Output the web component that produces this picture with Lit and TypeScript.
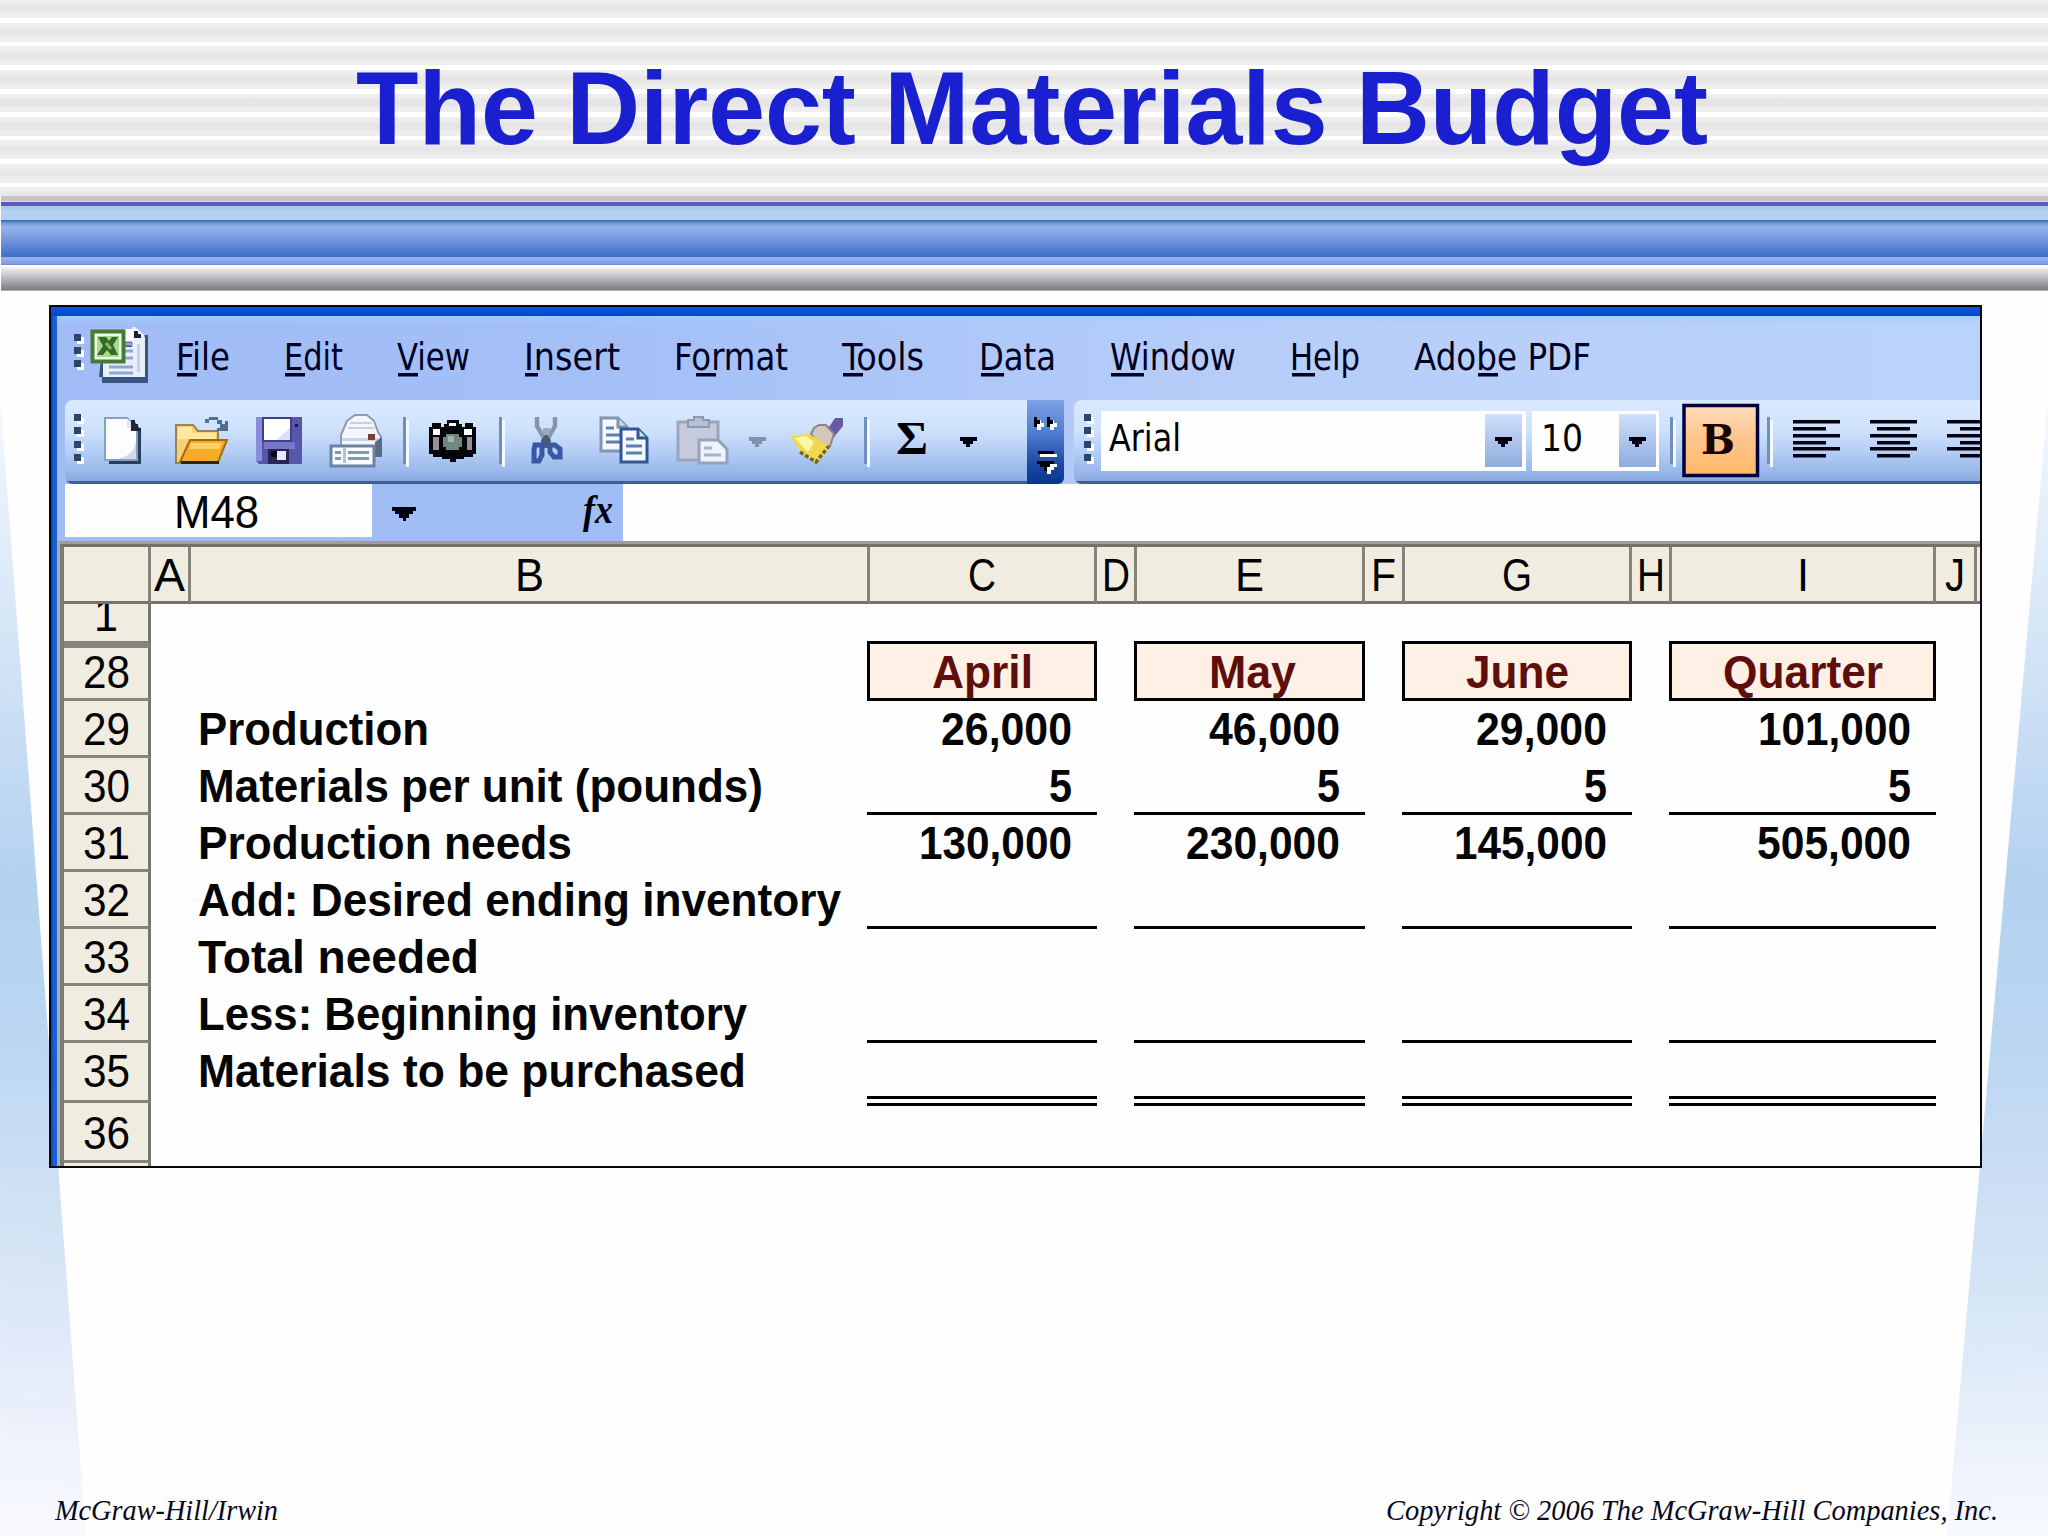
import { LitElement, html, svg, css } from "lit";
import { customElement } from "lit/decorators.js";

/* One line of text condensed or expanded to an exact width. */
const line = (cls: string, width: number, height: number, baseline: number, content: unknown) => html`
  <svg class="line" width=${width} height=${height}>
    <text class=${cls} x="0" y=${baseline} textLength=${width} lengthAdjust="spacingAndGlyphs">${content}</text>
  </svg>`;

/* Menu captions: text, width, start and length of the access key underline. */
const MENUS: [string, number, number, number][] = [
  ["File", 54, 1, 20],
  ["Edit", 59, 1, 20],
  ["View", 73, 1, 20],
  ["Insert", 96, 1, 13],
  ["Format", 114, 22, 20],
  ["Tools", 82, 1, 20],
  ["Data", 77, 2, 23],
  ["Window", 126, 1, 33],
  ["Help", 70, 2, 23],
  ["Adobe PDF", 177, 64, 20],
];

/* Column letters: text, cell width with its border, letter width. */
const COLS: [string, number, number][] = [
  ["A", 40, 31], ["B", 679, 29], ["C", 227, 28], ["D", 40, 28], ["E", 228, 29],
  ["F", 40, 25], ["G", 227, 30], ["H", 40, 28], ["I", 264, 12], ["J", 41, 20],
];

const HEADS: [string, number][] = [["April", 101], ["May", 87], ["June", 103], ["Quarter", 160]];

interface Row { n: string; label: string; w: number; v?: [string, number][]; rule?: string }
const ROWS: Row[] = [
  { n: "29", label: "Production", w: 231, v: [["26,000", 131], ["46,000", 131], ["29,000", 131], ["101,000", 153]] },
  { n: "30", label: "Materials per unit (pounds)", w: 565, v: [["5", 23], ["5", 23], ["5", 23], ["5", 23]], rule: "single" },
  { n: "31", label: "Production needs", w: 374, v: [["130,000", 153], ["230,000", 154], ["145,000", 153], ["505,000", 154]] },
  { n: "32", label: "Add: Desired ending inventory", w: 643, rule: "single" },
  { n: "33", label: "Total needed", w: 281 },
  { n: "34", label: "Less: Beginning inventory", w: 549, rule: "single" },
  { n: "35", label: "Materials to be purchased", w: 548, rule: "double" },
];

const grip = (x: number, ys: number[]) => svg`${ys.map(
  (y) => svg`<rect x=${x + 3} y=${y + 3} width="7" height="7" fill="#fff"/><rect x=${x} y=${y} width="7" height="7" fill="#2b4668"/>`)}`;
const sep = (x: number) => svg`<rect x=${x} y="417" width="3" height="47" fill="#6f8fbf"/><rect x=${x + 3} y="420" width="3" height="47" fill="#f4f9ff"/>`;
const arrow = (x: number, color: string) => svg`<path d=${`M${x} 437h17v4h-4v3h-3v3h-4v-3h-3v-3h-3z`} fill=${color}/>`;
const bars = (x: number, inset: number) => svg`${[420, 427, 434, 441, 447, 454].map(
  (y, i) => svg`<rect x=${i % 2 ? x + inset : x} y=${y} width=${i % 2 ? 33 : 47} height="3.500" fill="#00000e"/>`)}`;

/* Slots sit edge to edge in their bar; each drawing uses window coordinates. */
const slot = (x: number, end: number, art: unknown, y = 400, h = 84) => html`
  <svg class="slot" width=${end - x} height=${h} viewBox=${`${x} ${y} ${end - x} ${h}`}>${art}</svg>`;

const excel = svg`
  <path d="M103 342h36v-7h9v48h-46v-6h-3z" fill="#3a5680"/>
  <path d="M103 347h29v-20h3l10 10v40h-42z" fill="#e9f0fc"/>
  <path d="M124 329h9v12h-9zM137 335v-6l8 7z" fill="#fff"/><path d="M134 331h4v3h3v4h-7z" fill="#15233c"/>
  <path d="M124 344h9M124 351h9M124 358h9M109 367h24M109 373h24" stroke="#8fa8d3" stroke-width="3"/>
  <path d="M137 344h3v28h-3z" fill="#c4d2ee"/>
  <rect x="92.5" y="331.500" width="31" height="30" fill="#eefbe2" stroke="#477a35" stroke-width="4"/>
  <rect x="97" y="336" width="22" height="21" fill="#a7d98a"/>
  <path d="M98 337h8l3 4 3-4h6l-5 8 5 10h-7l-4-5-4 5h-6l6-9z" fill="#37692c"/>
  <path d="M106 343l5 6" stroke="#7fc05b" stroke-width="3"/>`;
const newDoc = svg`
  <path d="M109 421h25l7 9v34h-32z" fill="#263f63"/>
  <path d="M105 418h22l10 10v32h-32z" fill="#fdfdff" stroke="#8ba0bd" stroke-width="2"/>
  <path d="M112 459c14 0 22-6 24-18v18z" fill="#d3d9e8"/>
  <path d="M127 418v10h10z" fill="#dfe6f2"/><path d="M131 420h4v4h3v4h3v3h-10z" fill="#19263d"/>`;
const openDoc = svg`
  <path d="M176 425h17l5 6h20v32h-42z" fill="#f7cf74" stroke="#9b8250" stroke-width="2"/>
  <path d="M178 427h14v6h24v6h-38z" fill="#ffe7a1"/>
  <path d="M190 440h37l-9 22h-38z" fill="#f5ac28" stroke="#a46a12" stroke-width="2"/>
  <path d="M191 443h31l-3 6h-30z" fill="#ffd368"/>
  <path d="M181 461h38v3h-38z" fill="#30240e"/>
  <path d="M205 423v-4h4v-2h9v3h4v4h3v-3h3v10h-11v-3h3v-4h-3v-4h-8v3z" fill="#50708f"/>`;
const saveDoc = svg`
  <path d="M256 417h46v47h-43l-3-3z" fill="#5856aa"/>
  <path d="M256 417h6v44h-6z" fill="#8a8bdc"/>
  <path d="M262 417h30v25h-30z" fill="#40408c"/><path d="M264 419h26v21h-26z" fill="#fff"/>
  <path d="M290 428v12h-14z" fill="#dbe0fa"/><path d="M264 442h31v7h-31z" fill="#7877ca"/>
  <path d="M268 449h21v15h-21z" fill="#272654"/><path d="M277 451h9v9h-9z" fill="#e6e9fb"/><path d="M271 451h6v6h-6z" fill="#08081d"/>
  <path d="M295 424h3v3h-3z" fill="#18183d"/>`;
const printDoc = svg`
  <path d="M341 435l6-14 8-6h12l7 6 4 11 3 5v19h-40z" fill="#f4f6fb" stroke="#8f9cb2" stroke-width="2"/>
  <path d="M350 423h22M348 428h26" stroke="#c8d0de" stroke-width="2"/>
  <path d="M342 438h38v3h-38z" fill="#cfd6e2"/><path d="M368 434h7v6h-7z" fill="#7a3d34"/>
  <path d="M375 442l7-5v20h-7z" fill="#5b6b84"/>
  <path d="M331 446h43v20h-43z" fill="#f8fbff" stroke="#6b849f" stroke-width="3"/>
  <path d="M335 451h6v3h-6zM335 457h6v3h-6zM348 451h21v3h-21zM348 457h21v3h-21z" fill="#8498b0"/>
  <path d="M343 448h3v15h-3z" fill="#b3c4d8"/>`;
const camera = svg`
  <path d="M429 427h3v-4h9v4h3v-3h3v-4h12v4h3v3h3v-4h8v4h3v27h-3v3h-9v2h-8v3h-6v-3h-8v-2h-9v-3h-4z" fill="#05060b"/>
  <path d="M433 429h7v6h-7zM464 429h8v6h-8zM449 423h7v3h-7z" fill="#fff"/>
  <path d="M433 437h6v13h-6zM467 437h5v13h-5z" fill="#9a8f98"/>
  <path d="M446 434h13v3h3v10h-3v3h-13v-3h-3v-10h3z" fill="#72877f"/><path d="M448 436h6v6h-6z" fill="#a1b5aa"/>`;
const cut = svg`
  <path d="M537 417v9l8 14M555 417v9l-8 14" fill="none" stroke="#8396ae" stroke-width="4.500"/>
  <path d="M543 428h7v6h-7z" fill="#9aabbf"/>
  <path d="M546 434l5 6-2 8h-7l-1-8z" fill="#4a5a70"/>
  <path d="M535 445h7v10l-3 6h-5v-11zM550 445h5l5 4v8h-6l-4-5z" fill="none" stroke="#3857a4" stroke-width="5"/>`;
const page = (x: number, y: number, s: string) => svg`
  <path d=${`M${x} ${y}h17l9 9v24h-26z`} fill="#f5f9ff" stroke=${s} stroke-width="3"/>
  <path d=${`M${x + 17} ${y}v9h9`} fill="#cfdcf3" stroke=${s} stroke-width="3"/>
  <path d=${`M${x + 5} ${y + 10}h8M${x + 5} ${y + 17}h16M${x + 5} ${y + 24}h16`} stroke="#5f7fae" stroke-width="3"/>`;
const copy = svg`${page(601, 418, "#8095b1")}${page(621, 429, "#2f5791")}`;
const paste = svg`
  <path d="M678 422h40v38h-40z" fill="#c5cbdd" stroke="#9aa6be" stroke-width="3"/>
  <path d="M688 427v-7h6v-3h9v3h6v7z" fill="#b6bfd3" stroke="#8c9ab4" stroke-width="2"/>
  <path d="M699 440h19l9 9v14h-28z" fill="#eef2fb" stroke="#94a2bd" stroke-width="3"/>
  <path d="M704 448h8M704 455h17" stroke="#a5b2ca" stroke-width="3"/>`;
const brush = svg`
  <path d="M829 427l6-9h8v8l-9 11-7-5z" fill="#655aa5"/><path d="M829 430l6 6-4 3-6-6z" fill="#342e68"/>
  <path d="M811 434l3-6 5-3h7l8 9-4 12-9 1z" fill="#d4c5bd" stroke="#8f8484" stroke-width="2"/>
  <path d="M790 436h8l9-3 22 13-3 8-10 9-5-4-11-7-3-6z" fill="#f0d850"/>
  <path d="M795 438l11-2 8 6-6 10z" fill="#fff7ac"/>
  <path d="M800 452l16 10 13-16" fill="none" stroke="#6f6630" stroke-width="3.500" stroke-dasharray="4 2"/>`;

@customElement("app-root")
export class AppRoot extends LitElement {
  static styles = css`
    :host { display: block; }
    .slide { position: relative; width: 2048px; height: 1536px; overflow: hidden; background: #fefefe; display: flex; flex-direction: column; }
    .wedges { position: absolute; left: 0; top: 0; }
    .line, .slot { display: block; flex: none; overflow: visible; }
    .banner { height: 196px; flex: none; box-sizing: border-box; padding-left: 356px; background:
      linear-gradient(#fff, #fff) 0 18px / 100% 5px no-repeat,
      linear-gradient(#fff, #fff) 0 42px / 100% 4px no-repeat,
      linear-gradient(#fff, #fff) 0 65px / 100% 5px no-repeat,
      linear-gradient(#fff, #fff) 0 89px / 100% 5px no-repeat,
      linear-gradient(#fff, #fff) 0 112px / 100% 5px no-repeat,
      linear-gradient(#fff, #fff) 0 136px / 100% 4px no-repeat,
      linear-gradient(#fff, #fff) 0 159px / 100% 5px no-repeat,
      linear-gradient(#fff, #fff) 0 183px / 100% 4px no-repeat,
      repeating-linear-gradient(#eee 0 3px, #e6e6e6 6px 11px, #eee 14px 23.5px); }
    .ribbon { height: 95px; flex: none; margin-left: 1px; background: linear-gradient(
      #c4c4c4 0 5px, #d9d9ee 5px 6px, #5a5bb8 6px 10px, #a9c8e2 10px 12px, #b3d2f1 14px 23.5px,
      #3c6fbc 24px 25px, #6f9bdc 27px, #95b3ec 31px, #84a5e3 38px, #4470cc 59px, #4069be 61px,
      #92aeee 61px 63px, #7e9ae0 68px, #5c83cf 69px, #fff 69px 71px, #ededf1 72px, #c4c4c8 80px, #7c7c7f 94px, #dcdcdc 95px); }
    .title { font: bold 104px "Liberation Sans", Arial, sans-serif; fill: #1a20cf; }

    .window { margin: 14px 0 0 49px; width: 1933px; height: 863px; box-sizing: border-box; border: 2px solid #08080c; overflow: hidden;
      position: relative; display: flex; flex-direction: column; flex: none; background: #fefefe; }
    .titlebar { height: 9px; flex: none; background: linear-gradient(#0659e0, #0650d4 60%, #0a44b0); }
    .body { display: flex; flex: 1; min-height: 0; }
    .edge { width: 6px; flex: none; background: linear-gradient(90deg, #0b3fa0, #1560e0 40%, #1c5fd2); }
    .content { width: 1923px; flex: none; display: flex; flex-direction: column; background: linear-gradient(90deg, #a1bcf6, #a4c0f7 30%, #b6cdf9 60%, #bad3fa); }
    .menubar { height: 84px; flex: none; display: flex; background: linear-gradient(rgba(160, 205, 255, .9), rgba(175, 200, 250, 0) 8px); }
    .menus { display: flex; gap: 54.1px; }
    .menu { font: 37px "DejaVu Sans Condensed", "DejaVu Sans", Tahoma, sans-serif; fill: #000022; }

    .toolbars { height: 84px; flex: none; display: flex; padding-left: 8px; }
    .bar { height: 84px; display: flex; box-sizing: border-box; flex: none; overflow: hidden;
      background: linear-gradient(#d9eaff, #cfe2fc 35%, #b6cff6 60%, #90b0e6 92%, #8aa8dc 96.4%, #3c5f94 96.4%); border-radius: 8px 0 0 8px; }
    .standard { width: 962px; }
    .more { width: 37px; flex: none; background: linear-gradient(#7da2e6, #4d7ccf 40%, #1d4aa8 75%, #0a348c); border-radius: 0 0 6px 0; }
    .formatting { width: 906px; margin-left: 10px; }
    .ui { font: 37px "DejaVu Sans Condensed", "DejaVu Sans", Tahoma, sans-serif; fill: #000; }
    .bold { font: bold 41px "DejaVu Serif", "Liberation Serif", serif; fill: #190400; }
    .sigma { font: bold 47px "Liberation Serif", serif; fill: #000008; }

    .formula { height: 57px; flex: none; display: flex; padding-left: 8px; }
    .name { width: 307px; height: 53px; box-sizing: border-box; padding-left: 109px; background: #fefefe; flex: none; }
    .fxarea { width: 251px; flex: none; background: #a0bdf6; }
    .entry { flex: 1; background: #fefefe; }
    .cellfont { font: 47px "Liberation Sans", Arial, sans-serif; fill: #000; }
    .fx { font: italic bold 41px "Liberation Serif", serif; fill: #00000c; }

    .sheet { flex: 1; min-height: 0; display: flex; flex-direction: column; border-top: 3px solid #a09f95; border-left: 3px solid #a4adbd; background: #fefefe; }
    .heads, .row { display: flex; flex: none; border-left: 4px solid #7b7b72; }
    .heads { height: 60px; border-top: 3px solid #747368; background: #f0ece0; box-sizing: border-box; position: relative; z-index: 2; }
    .head { box-sizing: border-box; border-right: 3px solid #85847a; border-bottom: 3px solid #75746a; height: 57px; display: flex; justify-content: center; flex: none; }
    .corner { width: 87px; }
    .rest { flex: 1; border-right: none; }
    .num { box-sizing: border-box; width: 87px; height: 57px; flex: none; border-right: 3px solid #77766c; border-bottom: 3px solid #85847a;
      background: #f0ecdf; display: flex; justify-content: center; }
    .cells { display: grid; grid-template-columns: 679px 230px 231px 230px 267px; column-gap: 37px; height: 57px; }
    .label { padding-left: 47px; }
    .value { box-sizing: border-box; height: 57px; padding-right: 25px; display: flex; justify-content: flex-end; }
    .single { border-bottom: 3px solid #000; }
    .double { height: 63px; border-bottom: 10px double #000; }
    .r1 .num { height: 44px; border-bottom-width: 7px; }
    .r28 .num, .r28 .cells { height: 53px; }
    .r35 .num, .r36 .num { height: 60px; }
    .r35 .cells { height: 60px; }
    .box { box-sizing: border-box; height: 60px; margin-top: -7px; border: 3px solid #000; background: #fff0e6; display: flex; justify-content: center; z-index: 1; }
    .shift { padding-left: 6px; }
    .month { font: bold 47px "Liberation Sans", Arial, sans-serif; fill: #5e0f0c; }
    .strong { font: bold 47px "Liberation Sans", Arial, sans-serif; fill: #050505; }
    .last .num { height: 6px; border-bottom: none; }

    .footer { margin-top: auto; height: 50px; display: flex; justify-content: space-between; padding: 0 50px 0 55px; position: relative; }
    .credit { font: italic 29px "Liberation Serif", "Times New Roman", serif; fill: #08081a; }
  `;

  private row(r: Row) {
    return html`
      <div class="row ${`r${r.n}`}">
        <div class="num">${line("cellfont", 47, 54, 43.5, r.n)}</div>
        <div class="cells">
          <div class="label">${line("strong", r.w, 54, 43.5, r.label)}</div>
          ${[0, 1, 2, 3].map((i) => html`<div class="value ${r.rule ?? ""}">
            ${r.v ? line("strong", r.v[i][1], 50, 43.5, r.v[i][0]) : ""}</div>`)}
        </div>
      </div>`;
  }

  render() {
    return html`
      <div class="slide">
        <svg class="wedges" width="2048" height="1536">
          <defs>
            <linearGradient id="skyL" gradientUnits="userSpaceOnUse" x1="60" y1="400" x2="0" y2="1536">
              <stop offset="0" stop-color="#f4f9fe"/><stop offset=".25" stop-color="#cfe1f5"/><stop offset=".42" stop-color="#b4d2f0"/>
              <stop offset=".55" stop-color="#b9d5f1"/><stop offset=".7" stop-color="#cfe1f4"/><stop offset=".82" stop-color="#dfe9f8"/>
              <stop offset=".92" stop-color="#eff3fc"/><stop offset="1" stop-color="#f9fafe"/>
            </linearGradient>
            <linearGradient id="skyR" gradientUnits="userSpaceOnUse" x1="1988" y1="400" x2="2048" y2="1536">
              <stop offset="0" stop-color="#f4f9fe"/><stop offset=".25" stop-color="#cfe1f5"/><stop offset=".42" stop-color="#b4d2f0"/>
              <stop offset=".55" stop-color="#b9d5f1"/><stop offset=".7" stop-color="#cddff4"/><stop offset=".82" stop-color="#dae8f7"/>
              <stop offset=".92" stop-color="#ebf2fb"/><stop offset="1" stop-color="#f7f9fe"/>
            </linearGradient>
          </defs>
          <path d="M0 395L86 1536H0z" fill="url(#skyL)"/>
          <path d="M2048 400L1947 1536H2048z" fill="url(#skyR)"/>
        </svg>
        <header class="banner">${line("title", 1352, 196, 143.5, "The Direct Materials Budget")}</header>
        <div class="ribbon"></div>
        <main class="window">
          <div class="titlebar"></div>
          <div class="body">
            <div class="edge"></div>
            <div class="content">
              <nav class="menubar">
                ${slot(57, 176, svg`${grip(74, [334, 347, 360])}${excel}`, 316)}
                <div class="menus">
                  ${MENUS.map(([t, w, u, n]) => html`
                    <svg class="line" width=${w} height="84">
                      <text class="menu" x="0" y="54" textLength=${w} lengthAdjust="spacingAndGlyphs">${t}</text>
                      <rect x=${u} y="57" width=${n} height="3.500" fill="#000022"/>
                    </svg>`)}
                </div>
              </nav>
              <div class="toolbars">
                <div class="bar standard">
                  ${slot(65, 95, grip(74, [414, 427, 441, 454]))}
                  ${slot(95, 160, newDoc)}
                  ${slot(160, 245, openDoc)}
                  ${slot(245, 318, saveDoc)}
                  ${slot(318, 395, printDoc)}
                  ${slot(395, 418, sep(403))}
                  ${slot(418, 488, camera)}
                  ${slot(488, 518, sep(499))}
                  ${slot(518, 585, cut)}
                  ${slot(585, 665, copy)}
                  ${slot(665, 740, paste)}
                  ${slot(740, 780, arrow(749, "#8291ac"))}
                  ${slot(780, 855, brush)}
                  ${slot(855, 885, sep(864))}
                  ${slot(885, 945, svg`<text class="sigma" x="896" y="454" textLength="32" lengthAdjust="spacingAndGlyphs">Σ</text>`)}
                  ${slot(945, 1027, arrow(960, "#00000e"))}
                </div>
                <div class="more">${slot(1027, 1064, svg`
                  <path d="M1037 420h4v3h3v4h-3v3h-4zM1050 420h4v3h3v4h-3v3h-4z" fill="#fff"/>
                  <path d="M1034 417h3v3h3v4h-3v3h-3zM1047 417h3v3h3v4h-3v3h-3z" fill="#000"/>
                  <path d="M1038 451h16v3h-16z" fill="#000"/><path d="M1040 454h17v3h-17z" fill="#fff"/>
                  <path d="M1047 474v-7h3v-3h7v3h-3v3h-3v4z" fill="#fff"/><path d="M1037 461h17v3h-4v3h-3v4h-3v-4h-4v-3h-3z" fill="#000"/>`)}</div>
                <div class="bar formatting">
                  ${slot(1074, 1101, grip(1084, [414, 427, 441, 454]))}
                  ${slot(1101, 1532, svg`
                    <defs><linearGradient id="drop" x2="0" y2="1"><stop offset="0" stop-color="#cfe0fb"/><stop offset="1" stop-color="#8facdc"/></linearGradient></defs>
                    <rect x="1101" y="411" width="425" height="60" fill="#fefefe"/>
                    <rect x="1485" y="414" width="37" height="53" fill="url(#drop)"/>${arrow(1495, "#00000e")}
                    <text class="ui" x="1109" y="450.500" textLength="72" lengthAdjust="spacingAndGlyphs">Arial</text>`)}
                  ${slot(1532, 1665, svg`
                    <defs><linearGradient id="drop2" x2="0" y2="1"><stop offset="0" stop-color="#cfe0fb"/><stop offset="1" stop-color="#8facdc"/></linearGradient></defs>
                    <rect x="1532" y="411" width="127" height="60" fill="#fefefe"/>
                    <rect x="1619" y="414" width="37" height="53" fill="url(#drop2)"/>${arrow(1629, "#00000e")}
                    <text class="ui" x="1541" y="450.500" textLength="42" lengthAdjust="spacingAndGlyphs">10</text>`)}
                  ${slot(1665, 1680, sep(1670))}
                  ${slot(1680, 1762, svg`
                    <defs><linearGradient id="hot" x2="0" y2="1"><stop offset="0" stop-color="#ffdcbc"/><stop offset=".5" stop-color="#fcc48a"/><stop offset="1" stop-color="#ffb868"/></linearGradient></defs>
                    <rect x="1684" y="405.500" width="73.500" height="70" fill="url(#hot)" stroke="#00003c" stroke-width="3.500"/>
                    <text class="bold" x="1701" y="454" textLength="34" lengthAdjust="spacingAndGlyphs">B</text>`)}
                  ${slot(1762, 1785, sep(1767))}
                  ${slot(1785, 1860, bars(1793, 0))}
                  ${slot(1860, 1937, bars(1870, 7))}
                  ${slot(1937, 1980, bars(1947, 13))}
                </div>
              </div>
              <div class="formula">
                <div class="name">${line("cellfont", 85, 53, 43.5, "M48")}</div>
                <div class="fxarea">${slot(372, 623, svg`
                  <path d="M392 507h24v4h-3v3h-4v4h-3v3h-3v-3h-4v-4h-4v-3h-3z" fill="#00000e"/>
                  <text class="fx" x="583" y="523" textLength="30" lengthAdjust="spacingAndGlyphs">fx</text>`, 484, 53)}</div>
                <div class="entry"></div>
              </div>
              <div class="sheet">
                <div class="heads">
                  <div class="head corner"></div>
                  ${COLS.map(([c, w, t]) => html`<div class="head" style="width:${w}px">${line("cellfont", t, 54, 44, c)}</div>`)}
                  <div class="head rest"></div>
                </div>
                <div class="row r1"><div class="num">${line("cellfont", 24, 37, 26.5, "1")}</div></div>
                <div class="row r28">
                  <div class="num">${line("cellfont", 47, 50, 40, "28")}</div>
                  <div class="cells">
                    <div></div>
                    ${HEADS.map(([t, w]) => html`<div class="box ${t === "May" ? "shift" : ""}">${line("month", w, 54, 43.5, t)}</div>`)}
                  </div>
                </div>
                ${ROWS.map((r) => this.row(r))}
                <div class="row r36"><div class="num">${line("cellfont", 47, 57, 46, "36")}</div></div>
                <div class="row last"><div class="num"></div></div>
              </div>
            </div>
          </div>
        </main>
        <footer class="footer">
          ${line("credit", 223, 50, 34, "McGraw-Hill/Irwin")}
          ${line("credit", 612, 50, 34, "Copyright © 2006 The McGraw-Hill Companies, Inc.")}
        </footer>
      </div>`;
  }
}
